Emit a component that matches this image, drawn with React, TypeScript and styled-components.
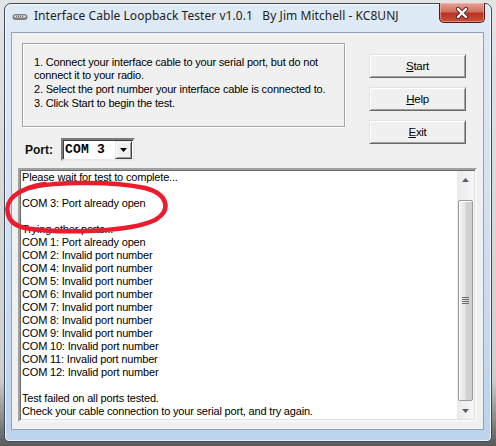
import React from "react";
import styled, { createGlobalStyle } from "styled-components";

const GlobalStyle = createGlobalStyle`
  html, body { margin: 0; padding: 0; }
  body { width: 496px; height: 446px; overflow: hidden; background: #d6d6d6; }
  * { box-sizing: border-box; }
`;

const UI_FONT = `"Liberation Sans", Arial, sans-serif`;

const Desktop = styled.div`
  position: relative;
  width: 496px;
  height: 446px;
  padding: 3px 4px 4px 4px;
  background: linear-gradient(180deg, #e4e4e4 0%, #cfcfcf 85%, #5a5a5a 100%);
`;

const Window = styled.div`
  width: 488px;
  height: 439px;
  border: 1px solid #3b4a5c;
  border-radius: 7px 7px 5px 5px;
  background: linear-gradient(180deg, #dfeaf6 0%, #d3e3f4 40%, #bcd3ec 100%);
  box-shadow: inset 0 0 0 1px rgba(255, 255, 255, 0.75);
  display: flex;
  flex-direction: column;
`;

const TitleBar = styled.div`
  height: 28px;
  display: flex;
  align-items: flex-start;
  padding-left: 7px;
  padding-right: 6px;
`;

const TitleIcon = styled.svg`
  margin-top: 9px;
  flex: none;
`;

const TitleText = styled.div`
  margin-top: 4px;
  margin-left: 6px;
  font-family: "Noto Sans", "Open Sans", sans-serif;
  font-size: 12px;
  line-height: 16px;
  color: #1e1e1e;
  white-space: pre;
  letter-spacing: 0.05px;
`;

const CloseButton = styled.div`
  margin-left: auto;
  margin-top: -1px;
  width: 46px;
  height: 20px;
  border: 1px solid #4e1a14;
  border-top: none;
  border-radius: 0 0 5px 5px;
  background: linear-gradient(180deg, #e8a194 0%, #d2705f 45%, #bc3220 55%, #c9513d 100%);
  box-shadow: inset 0 0 0 1px rgba(255, 200, 190, 0.5);
  display: flex;
  align-items: center;
  justify-content: center;
`;

const Client = styled.div`
  flex: 1;
  margin: 0 7px 11px 6px;
  border: 1px solid #8ea3bb;
  background: #f0f0f0;
  padding: 10px 6px 7px 6px;
  display: flex;
  flex-direction: column;
  font-family: ${UI_FONT};
  font-size: 11px;
  letter-spacing: -0.18px;
  color: #000;
`;

const TopRow = styled.div`
  display: flex;
  justify-content: space-between;
  align-items: flex-start;
`;

const LeftCol = styled.div`
  margin-left: 4px;
  display: flex;
  flex-direction: column;
`;

const GroupBox = styled.div`
  width: 323px;
  height: 84px;
  border: 1px solid #a3a3a3;
  box-shadow: inset 1px 1px 0 #ffffff, 1px 1px 0 #ffffff;
  padding: 12px 0 0 11px;
`;

const Instruction = styled.div`
  line-height: 13px;
  margin-bottom: 1px;
`;

const PortRow = styled.div`
  margin-top: 11px;
  display: flex;
  align-items: center;
  height: 23px;
`;

const PortLabel = styled.span`
  margin-left: 3px;
  font-weight: bold;
  font-size: 12px;
  letter-spacing: 0;
  color: #111;
`;

const Combo = styled.div`
  margin-left: 8px;
  width: 74px;
  height: 23px;
  background: #fff;
  border-style: solid;
  border-width: 2px;
  border-color: #7a7a7a #e8e8e8 #e8e8e8 #7a7a7a;
  box-shadow: inset 1px 1px 0 #404040;
  display: flex;
  align-items: center;
  padding: 0 1px 0 2px;
`;

const ComboValue = styled.span`
  flex: 1;
  font-family: "Liberation Mono", "DejaVu Sans Mono", monospace;
  font-weight: bold;
  font-size: 13px;
  letter-spacing: 0.2px;
  white-space: pre;
`;

const ComboArrow = styled.div`
  width: 17px;
  height: 18px;
  background: #f0f0f0;
  border-style: solid;
  border-width: 1px;
  border-color: #e3e3e3 #404040 #404040 #e3e3e3;
  box-shadow: inset 1px 1px 0 #fff, inset -1px -1px 0 #a0a0a0;
  display: flex;
  align-items: center;
  justify-content: center;
`;

const ButtonCol = styled.div`
  margin-top: 11px;
  margin-right: 11px;
  display: flex;
  flex-direction: column;
  gap: 9px;
`;

const Button = styled.div`
  width: 97px;
  height: 24px;
  background: #f0f0f0;
  border-style: solid;
  border-width: 1px;
  border-color: #e3e3e3 #696969 #696969 #e3e3e3;
  box-shadow: inset 1px 1px 0 #ffffff, inset -1px -1px 0 #a0a0a0;
  display: flex;
  align-items: center;
  justify-content: center;
  font-size: 11.5px;
  letter-spacing: -0.3px;
  padding-bottom: 1px;
`;

const Accel = styled.span`
  text-decoration: underline;
`;

const TextBox = styled.div`
  margin-top: 7px;
  height: 254px;
  background: #fff;
  border-style: solid;
  border-width: 2px;
  border-color: #a0a0a0 #f7f7f7 #f7f7f7 #a0a0a0;
  box-shadow: inset 1px 1px 0 #696969, inset -1px -1px 0 #e3e3e3;
  display: flex;
`;

const TextContent = styled.div`
  flex: 1;
  padding: 1px 0 0 2px;
  line-height: 13px;
  white-space: pre;
  overflow: hidden;
`;

const Line = styled.div`
  height: 13px;
`;

const ScrollBar = styled.div`
  width: 17px;
  margin: 1px 1px 1px 0;
  background: linear-gradient(90deg, #eaeaea, #f6f6f6);
  display: flex;
  flex-direction: column;
`;

const ScrollArrow = styled.div`
  height: 17px;
  flex: none;
  display: flex;
  align-items: center;
  justify-content: center;
`;

const ScrollThumb = styled.div`
  flex: 1;
  margin: 12px 1px 1px 1px;
  border: 1px solid #9a9a9a;
  border-radius: 2px;
  background: linear-gradient(90deg, #f2f2f2 0%, #e6e6e6 45%, #d3d3d3 55%, #cfcfcf 100%);
  box-shadow: inset 1px 1px 0 #fdfdfd;
  display: flex;
  align-items: center;
  justify-content: center;
`;

const Annotation = styled.svg`
  position: absolute;
  left: 0;
  top: 0;
  pointer-events: none;
`;

const lines = [
  "Please wait for test to complete...",
  "",
  "COM 3: Port already open",
  "",
  "Trying other ports...",
  "COM 1: Port already open",
  "COM 2: Invalid port number",
  "COM 4: Invalid port number",
  "COM 5: Invalid port number",
  "COM 6: Invalid port number",
  "COM 7: Invalid port number",
  "COM 8: Invalid port number",
  "COM 9: Invalid port number",
  "COM 10: Invalid port number",
  "COM 11: Invalid port number",
  "COM 12: Invalid port number",
  "",
  "Test failed on all ports tested.",
  "Check your cable connection to your serial port, and try again.",
];

export default function App() {
  return (
    <>
      <GlobalStyle />
      <Desktop>
        <Window>
          <TitleBar>
            <TitleIcon width="16" height="8" viewBox="0 0 16 8">
              <rect x="0.5" y="1" width="15" height="6" rx="3" fill="#7d7d7d" />
              <rect x="2" y="2.2" width="12" height="2.4" rx="1.2" fill="#d9d9d9" />
              <g fill="#6a6a6a">
                <rect x="4" y="2.6" width="1" height="1.4" />
                <rect x="6" y="2.6" width="1" height="1.4" />
                <rect x="8" y="2.6" width="1" height="1.4" />
                <rect x="10" y="2.6" width="1" height="1.4" />
              </g>
            </TitleIcon>
            <TitleText>{"Interface Cable Loopback Tester v1.0.1   By Jim Mitchell - KC8UNJ"}</TitleText>
            <CloseButton>
              <svg width="14" height="12" viewBox="0 0 14 12">
                <path d="M3 2 L11 10 M11 2 L3 10" stroke="#4a2a28" strokeWidth="4.2" strokeLinecap="round" />
                <path d="M3 2 L11 10 M11 2 L3 10" stroke="#ffffff" strokeWidth="2.4" strokeLinecap="round" />
              </svg>
            </CloseButton>
          </TitleBar>
          <Client>
            <TopRow>
              <LeftCol>
                <GroupBox>
                  <Instruction>
                    1. Connect your interface cable to your serial port, but do not
                    <br />
                    connect it to your radio.
                  </Instruction>
                  <Instruction>2. Select the port number your interface cable is connected to.</Instruction>
                  <Instruction>3. Click Start to begin the test.</Instruction>
                </GroupBox>
                <PortRow>
                  <PortLabel>Port:</PortLabel>
                  <Combo>
                    <ComboValue>COM 3</ComboValue>
                    <ComboArrow>
                      <svg width="7" height="4" viewBox="0 0 7 4">
                        <path d="M0 0 H7 L3.5 4 Z" fill="#000" />
                      </svg>
                    </ComboArrow>
                  </Combo>
                </PortRow>
              </LeftCol>
              <ButtonCol>
                <Button>
                  <Accel>S</Accel>tart
                </Button>
                <Button>
                  <Accel>H</Accel>elp
                </Button>
                <Button>
                  <Accel>E</Accel>xit
                </Button>
              </ButtonCol>
            </TopRow>
            <TextBox>
              <TextContent>
                {lines.map((l, i) => (
                  <Line key={i}>{l}</Line>
                ))}
              </TextContent>
              <ScrollBar>
                <ScrollArrow>
                  <svg width="7" height="4" viewBox="0 0 7 4">
                    <path d="M0 4 H7 L3.5 0 Z" fill="#555e6a" />
                  </svg>
                </ScrollArrow>
                <ScrollThumb>
                  <svg width="7" height="7" viewBox="0 0 7 7">
                    <path d="M0 0.5 H7 M0 2.5 H7 M0 4.5 H7 M0 6.5 H7" stroke="#6b6b6b" strokeWidth="1" />
                  </svg>
                </ScrollThumb>
                <ScrollArrow>
                  <svg width="7" height="4" viewBox="0 0 7 4">
                    <path d="M0 0 H7 L3.5 4 Z" fill="#555e6a" />
                  </svg>
                </ScrollArrow>
              </ScrollBar>
            </TextBox>
          </Client>
        </Window>
        <Annotation width="496" height="446" viewBox="0 0 496 446">
          <path
            d="M24 190 C 40 182, 110 180, 145 188 C 168 194, 172 210, 155 220 C 130 232, 60 234, 25 228 C 5 224, 3 205, 14 196 C 20 191, 30 186, 45 184"
            fill="none"
            stroke="#ec1c2c"
            strokeWidth="4.5"
            strokeLinecap="round"
            strokeLinejoin="round"
          />
        </Annotation>
      </Desktop>
    </>
  );
}
